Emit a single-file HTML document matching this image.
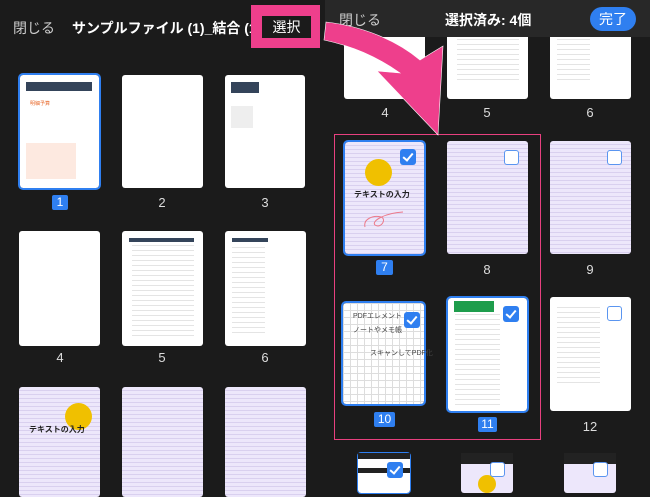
<html><head><style>
body{margin:0;width:650px;height:488px;background:#1b1b1b;position:relative;overflow:hidden;font-family:"Liberation Sans","Noto Sans CJK JP",sans-serif;color:#fff}
.a{position:absolute}
.p{position:absolute;background:#fff;border-radius:3px}
.l{background:repeating-linear-gradient(#ede7fb 0 3px,#d9d0ef 3px 4px)}
.sel{outline:2px solid #2f7ff0}
.n{position:absolute;font-size:13px;color:#ddd;text-align:center;width:30px}
.nb{position:absolute;background:#2f7ff0;color:#fff;font-size:12px;text-align:center;border-radius:2px;height:15px;line-height:15px}
.cb{position:absolute;width:13px;height:13px;border:1.5px solid #5a95f0;border-radius:3px;background:#fff}
.ck{position:absolute;width:16px;height:16px;background:#2f7ff0;border-radius:3px}
.ck:after{content:"";position:absolute;left:5px;top:2px;width:4px;height:8px;border:solid #fff;border-width:0 2px 2px 0;transform:rotate(40deg)}
.rows{background:repeating-linear-gradient(#fff 0 4px,#e4e4e4 4px 5px)}
.c{position:absolute;width:27px;height:27px;border-radius:50%;background:#f0c000}
.t{position:absolute;font-size:8px;font-weight:bold;color:#222}
</style></head><body>
<div class="a" style="left:13px;top:18px;font-size:14px;color:#ccc">閉じる</div>
<div class="a" style="left:72px;top:18px;font-size:14px;font-weight:bold;white-space:nowrap;width:180px;overflow:hidden">サンプルファイル (1)_結合 (1)</div>
<div class="a" style="left:251px;top:5px;width:69px;height:43px;background:#ee3f8c"></div>
<div class="a" style="left:262px;top:16px;width:49px;height:22px;background:#1b1b1b;font-size:14px;text-align:center;line-height:22px">選択</div>

<div class="p sel" style="left:20px;top:75px;width:79px;height:113px"><div class="a" style="left:6px;top:7px;width:66px;height:9px;background:#34445a"></div><div class="a" style="left:10px;top:25px;font-size:5px;color:#e86a2c">明細予算</div><div class="a" style="left:6px;top:68px;width:50px;height:36px;background:#fde9e0"></div></div>
<div class="nb" style="left:52px;top:195px;width:16px">1</div>
<div class="p" style="left:122px;top:75px;width:81px;height:113px"></div>
<div class="n" style="left:147px;top:195px">2</div>
<div class="p" style="left:225px;top:75px;width:80px;height:113px"><div class="a" style="left:6px;top:7px;width:28px;height:11px;background:#34445a"></div><div class="a" style="left:6px;top:31px;width:22px;height:22px;background:#eee"></div></div>
<div class="n" style="left:250px;top:195px">3</div>

<div class="p" style="left:19px;top:231px;width:81px;height:115px"></div>
<div class="n" style="left:45px;top:350px">4</div>
<div class="p" style="left:122px;top:231px;width:81px;height:115px"><div class="a rows" style="left:10px;top:5px;width:62px;height:100px"></div><div class="a" style="left:7px;top:7px;width:65px;height:4px;background:#34445a"></div></div>
<div class="n" style="left:147px;top:350px">5</div>
<div class="p" style="left:225px;top:231px;width:81px;height:115px"><div class="a rows" style="left:7px;top:12px;width:33px;height:92px"></div><div class="a" style="left:7px;top:7px;width:36px;height:4px;background:#34445a"></div></div>
<div class="n" style="left:250px;top:350px">6</div>

<div class="p l" style="left:19px;top:387px;width:81px;height:110px"><div class="c" style="left:46px;top:16px"></div><div class="t" style="left:10px;top:37px">テキストの入力</div></div>
<div class="p l" style="left:122px;top:387px;width:81px;height:110px"></div>
<div class="p l" style="left:225px;top:387px;width:81px;height:110px"></div>

<div class="a" style="left:325px;top:0;width:325px;height:488px;background:#1b1b1b"></div>
<div class="p" style="left:344px;top:30px;width:81px;height:69px"></div>
<div class="p" style="left:447px;top:30px;width:81px;height:69px"><div class="a rows" style="left:10px;top:5px;width:62px;height:45px"></div></div>
<div class="p" style="left:550px;top:30px;width:81px;height:69px"><div class="a rows" style="left:7px;top:5px;width:33px;height:45px"></div></div>
<div class="a" style="left:325px;top:0;width:325px;height:37px;background:#282828"></div>
<div class="a" style="left:339px;top:10px;font-size:14px;color:#ccc">閉じる</div>
<div class="a" style="left:445px;top:10px;font-size:14px;font-weight:bold">選択済み: 4個</div>
<div class="a" style="left:590px;top:7px;width:46px;height:24px;border-radius:12px;background:#2f7ff0;font-size:14px;text-align:center;line-height:24px">完了</div>
<div class="n" style="left:370px;top:105px">4</div><div class="n" style="left:472px;top:105px">5</div><div class="n" style="left:575px;top:105px">6</div>

<div class="a" style="left:334px;top:134px;width:205px;height:304px;border:1.5px solid #e8407f"></div>
<div class="p l sel" style="left:345px;top:142px;width:79px;height:112px"><div class="c" style="left:20px;top:17px"></div><div class="t" style="left:9px;top:47px">テキストの入力</div><svg class="a" style="left:18px;top:65px" width="42" height="22"><path d="M2 20C0 12 10 8 18 10C24 12 18 22 12 18C8 14 22 6 40 5" fill="none" stroke="#ec7a8a" stroke-width="1"/></svg></div>
<div class="ck" style="left:400px;top:149px"></div>
<div class="p l" style="left:447px;top:141px;width:81px;height:113px"></div><div class="cb" style="left:504px;top:150px"></div>
<div class="p l" style="left:550px;top:141px;width:81px;height:113px"></div><div class="cb" style="left:607px;top:150px"></div>
<div class="nb" style="left:376px;top:260px;width:17px">7</div>
<div class="n" style="left:472px;top:262px">8</div><div class="n" style="left:575px;top:262px">9</div>

<div class="p sel" style="left:343px;top:303px;width:81px;height:101px;background-color:#fff;background-image:linear-gradient(90deg,#ddd 1px,transparent 1px),linear-gradient(#ddd 1px,transparent 1px);background-size:7px 7px"><div class="a" style="left:10px;top:8px;font-size:7px;color:#444;white-space:nowrap">PDFエレメント</div><div class="a" style="left:10px;top:22px;font-size:7px;color:#444;white-space:nowrap">ノートやメモ帳</div><div class="a" style="left:27px;top:45px;font-size:7px;color:#444;white-space:nowrap">スキャンしてPDF化</div></div>
<div class="ck" style="left:404px;top:312px"></div>
<div class="nb" style="left:374px;top:412px;width:21px">10</div>
<div class="p sel" style="left:448px;top:298px;width:79px;height:113px"><div class="a rows" style="left:7px;top:12px;width:45px;height:95px"></div><div class="a" style="left:6px;top:3px;width:40px;height:11px;background:#1e9d4c"></div></div>
<div class="ck" style="left:503px;top:306px"></div>
<div class="nb" style="left:478px;top:417px;width:19px">11</div>
<div class="p" style="left:550px;top:297px;width:81px;height:114px"><div class="a rows" style="left:7px;top:6px;width:43px;height:80px"></div></div><div class="cb" style="left:607px;top:306px"></div>
<div class="n" style="left:575px;top:419px">12</div>

<div class="p" style="left:358px;top:453px;width:52px;height:40px;outline:1.5px solid #2f7ff0;background:#fff"><div class="a" style="left:0;top:0;width:52px;height:6px;background:#222"></div><div class="a" style="left:0;top:15px;width:52px;height:5px;background:#222"></div></div>
<div class="ck" style="left:387px;top:462px"></div>
<div class="p" style="left:461px;top:453px;width:52px;height:40px;background:#ede7fb"><div class="a" style="left:0;top:0;width:52px;height:11px;background:#222"></div><div class="c" style="left:17px;top:22px;width:18px;height:18px"></div></div>
<div class="cb" style="left:490px;top:462px"></div>
<div class="p" style="left:564px;top:453px;width:52px;height:40px;background:#ede7fb"><div class="a" style="left:0;top:0;width:52px;height:11px;background:#222"></div></div>
<div class="cb" style="left:593px;top:462px"></div>

<svg class="a" style="left:0;top:0" width="650" height="488"><path d="M326 22 C362 26 396 40 420 60 L443 46 L438 135 L377 71 L400 73 C376 56 352 46 324 40 Z" fill="#ee3f8c" stroke="#fff" stroke-width="0.6"/></svg>
</body></html>
